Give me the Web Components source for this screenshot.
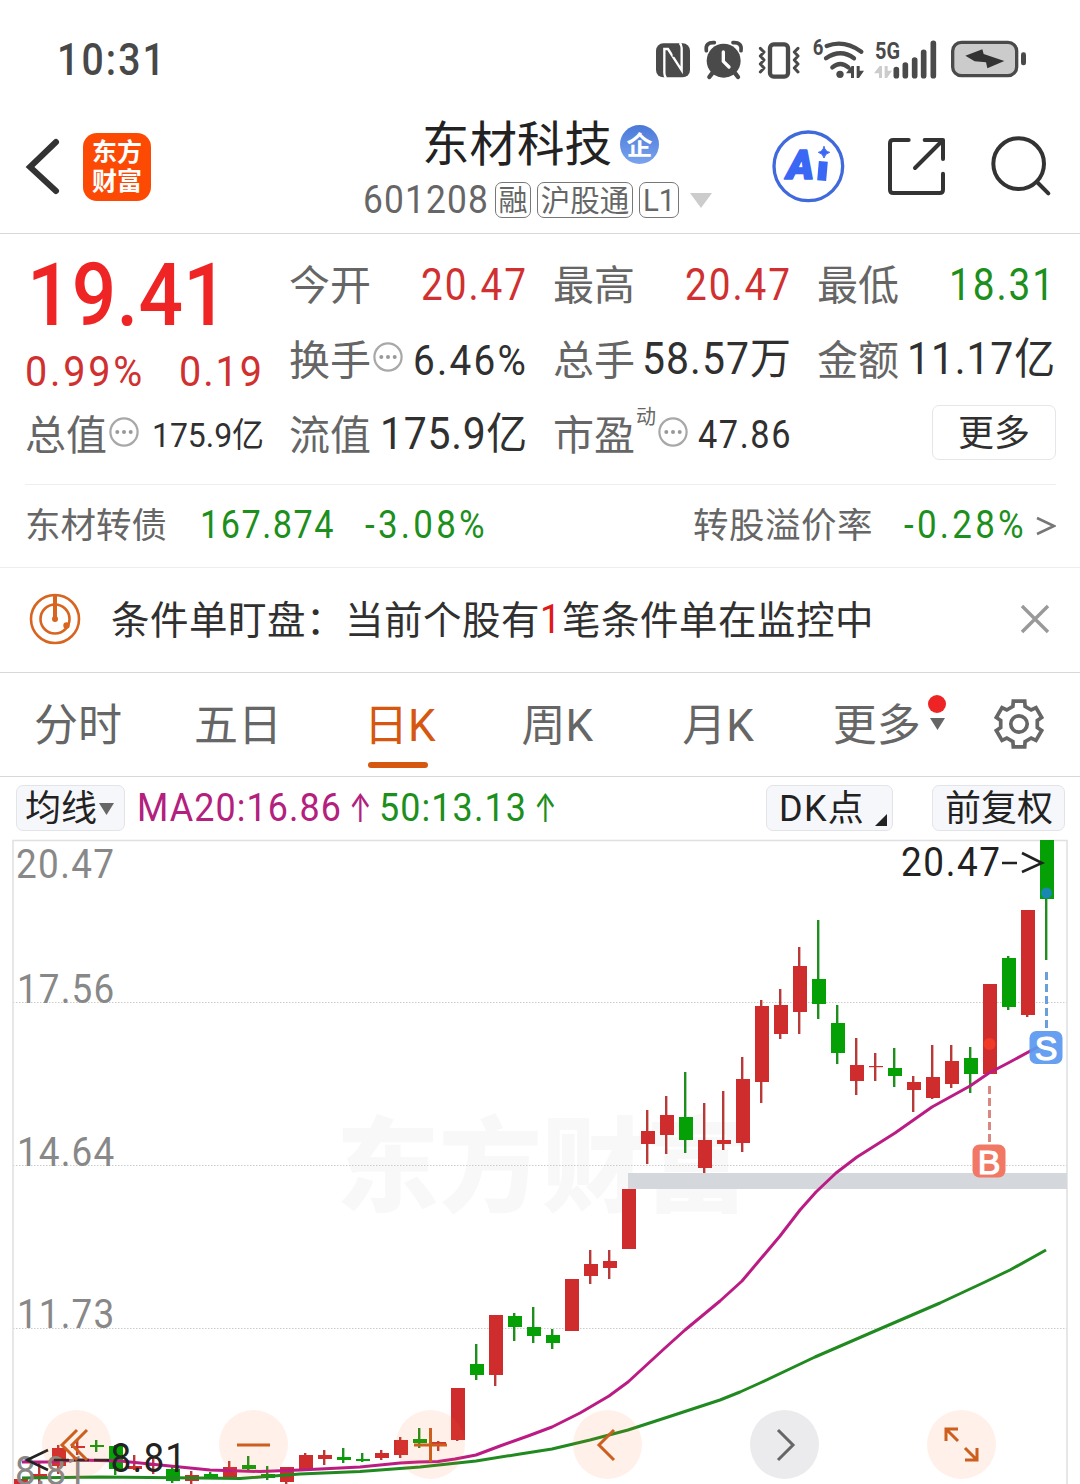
<!DOCTYPE html>
<html lang="zh-CN">
<head>
<meta charset="utf-8">
<title>东材科技 601208</title>
<style>
    html, body {
        margin: 0;
        padding: 0;
        background: #fff;
    }
    body {
        width: 1080px;
        height: 1484px;
        overflow: hidden;
        font-family: Roboto, "Noto Sans CJK SC", sans-serif;
        color: #333;
    }
</style>
</head>
<body>
<stock-page></stock-page>
<script>
function define(name, html, setup) {
  const template = document.createElement('template');
  template.innerHTML = html;
  customElements.define(name, class extends HTMLElement {
    connectedCallback() {
      if (this.shadowRoot) {
        return;
      }
      this.attachShadow({ mode: 'open' }).appendChild(template.content.cloneNode(true));
      if (setup) {
        setup(this, this.shadowRoot);
      }
    }
  });
}

// text run tracked out (or in) to a given width, "narrow" condenses the glyphs
define('text-run', `
<style>
    :host {
        display: inline-block;
        white-space: nowrap;
        line-height: 1.2;
        flex: none;
    }
    span {
        display: inline-block;
        transform-origin: 0 50%;
    }
</style>
<span><slot></slot></span>
`, (el, root) => {
  const span = root.querySelector('span');
  const size = Number(el.getAttribute('size'));
  const width = Number(el.getAttribute('w'));
  const scale = Number(el.getAttribute('narrow')) || 1;
  const text = el.textContent;
  el.style.fontSize = `${size}px`;
  // han glyphs sit a little high on the latin baseline
  if (text.charCodeAt(0) > 0x2e80) {
    el.style.paddingTop = `${Math.round(size * 0.1)}px`;
  }
  if (width) {
    const natural = span.getBoundingClientRect().width;
    el.style.letterSpacing = `${(width / scale - natural) / Array.from(text).length}px`;
    el.style.width = `${width}px`;
    span.style.transform = `scaleX(${scale})`;
  }
});

define('status-bar', `
<style>
    :host {
        display: flex;
        justify-content: space-between;
        height: 110px;
        box-sizing: border-box;
        padding: 20px 40px 0 57px;
        color: #484848;
    }
    text-run {
        font-weight: 500;
        margin-top: 14px;
    }
    svg {
        display: block;
    }
</style>
<text-run size="44.500" w="110" narrow=".88">10:31</text-run>
<svg width="400" height="80" viewBox="0 0 1200 240" fill="#4a4a4a">
  <rect x="48" y="70" width="102" height="102" rx="22"/>
  <path d="M78 174q-5-6-5-16V87h11l41 64V84q0-10-6-15" fill="none" stroke="#fff" stroke-width="7"/>
  <path d="M94 122v36M104 92v18" fill="none" stroke="#4a4a4a" stroke-width="12"/>
  <circle cx="251" cy="122" r="51"/>
  <path d="M199 92q-4-26 24-24M303 92q4-26-24-24" fill="none" stroke="#4a4a4a" stroke-width="11" stroke-linecap="round"/>
  <path d="M218 158l-10 13M284 158l10 13" stroke="#4a4a4a" stroke-width="13" stroke-linecap="round"/>
  <path d="M250 96v28l17 17" fill="none" stroke="#fff" stroke-width="10" stroke-linecap="round"/>
  <rect x="390" y="73" width="54" height="97" rx="11" fill="none" stroke="#4a4a4a" stroke-width="13"/>
  <path d="M361 85l11 11-11 12 11 12-11 12 11 12-11 12M474 85l-11 11 11 12-11 12 11 12-11 12 11 12" fill="none" stroke="#4a4a4a" stroke-width="9" stroke-linecap="round" stroke-linejoin="round"/>
  <text x="518" y="106" font-size="66" font-weight="700" textLength="32" lengthAdjust="spacingAndGlyphs">6</text>
  <path d="M560 78q52-20 104 17M558 115q44-30 84 0M577 142q24-20 48 0" fill="none" stroke="#4a4a4a" stroke-width="13" stroke-linecap="round"/>
  <circle cx="600" cy="163" r="11"/>
  <path d="M618 160l17-22h7v36h-9v-14zM650 138h9v14h13l-15 22h-7z"/>
  <path d="M702 160l17-22h7v36h-9v-14zM734 138h9v14h13l-15 22h-7z" fill="#ccc"/>
  <text x="705" y="116" font-size="70" font-weight="700" textLength="75" lengthAdjust="spacingAndGlyphs">5G</text>
  <path d="M769 149v18M796 135v32M824 120v47M851 97v70M880 70v97" stroke="#4a4a4a" stroke-width="17" stroke-linecap="round"/>
  <rect x="938" y="67" width="192" height="100" rx="26" fill="#cbcbcb" stroke="#4a4a4a" stroke-width="10"/>
  <rect x="1143" y="97" width="15" height="39" rx="7"/>
  <path d="M976 107L1027 88L1031 102L1093 123L1042 145L1038 127L1004 124z" fill="#333"/>
</svg>
`);

define('tag-box', `
<style>
    :host {
        display: flex;
        align-items: center;
        justify-content: center;
        height: 34px;
        border: 1.5px solid #777;
        border-radius: 7px;
        color: #666;
        flex: none;
    }
</style>
<slot></slot>
`);

define('page-header', `
<style>
    :host {
        display: grid;
        grid-template-columns: 360px 360px 360px;
        height: 124px;
        box-sizing: border-box;
        border-bottom: 1.5px solid #d8d8d8;
    }
    svg {
        display: block;
    }
    .left {
        display: flex;
        padding: 23px 0 0 24px;
    }
    .logo {
        display: grid;
        grid-template-columns: 25px 25px;
        grid-template-rows: 29px 29px;
        place-content: center;
        place-items: center;
        width: 68px;
        height: 68px;
        margin-left: 19px;
        border-radius: 14px;
        background: #fc4a05;
        color: #fff;
        font-size: 25px;
        font-weight: 700;
        line-height: 31px;
    }
    .title, .sub {
        display: flex;
        align-items: center;
    }
    .title {
        height: 60px;
        padding: 3px 0 0 62px;
        color: #222;
        gap: 8px;
    }
    .badge {
        width: 39px;
        height: 39px;
        margin-top: 2px;
        border-radius: 50%;
        background: linear-gradient(#4a78d8, #7ba4ee);
        color: #fff;
        font-size: 26px;
        font-weight: 700;
        line-height: 42px;
        text-align: center;
    }
    .sub {
        height: 40px;
        margin-top: 7px;
        padding: 0 0 0 3px;
        gap: 6px;
        color: #666;
    }
</style>
<div class="left">
  <svg width="40" height="70" viewBox="0 0 40 70"><path d="M32 9L6 34l26 24" fill="none" stroke="#333" stroke-width="6" stroke-linecap="round"/></svg>
  <div class="logo"><span>东</span><span>方</span><span>财</span><span>富</span></div>
</div>
<div>
  <div class="title"><text-run size="47.500" w="190">东材科技</text-run><div class="badge">企</div></div>
  <div class="sub">
    <text-run size="38" w="126" narrow=".93" style="padding-top:2px">601208</text-run>
    <tag-box style="width:34px"><text-run size="29">融</text-run></tag-box>
    <tag-box style="width:94px"><text-run size="29.500">沪股通</text-run></tag-box>
    <tag-box style="width:38px"><text-run size="32" w="32" narrow=".92">L1</text-run></tag-box>
    <svg width="22" height="15" viewBox="0 0 22 15" style="margin-left:5px"><path d="M0 0h22L11 15z" fill="#ccc"/></svg>
  </div>
</div>
<svg width="360" height="120" viewBox="-90 0 1080 360" fill="none" stroke="#333" stroke-width="12" stroke-linecap="round" stroke-linejoin="round">
  <circle cx="175" cy="169" r="103" stroke="#4069dc" stroke-width="10"/>
  <text x="110" y="206" font-size="122" font-weight="900" font-style="italic" fill="#3a68f5" stroke="#3a68f5" stroke-width="5" textLength="82" lengthAdjust="spacingAndGlyphs">A</text>
  <path d="M220 154l-5 58" stroke="#3a68f5" stroke-width="27" stroke-linecap="butt"/>
  <path d="M222 110q3 14 17 17-14 3-17 17-3-14-17-17 14-3 17-17z" fill="#3a68f5" stroke="#3a68f5" stroke-width="3"/>
  <path d="M476 90h-46q-10 0-10 10v139q0 10 10 10h139q10 0 10-10v-48M524 90h55v57M576 93l-81 81"/>
  <circle cx="806" cy="161" r="76"/>
  <path d="M861 216l34 34"/>
</svg>
`);

define('info-dot', `
<style>
    :host {
        display: block;
        width: 30px;
        height: 30px;
        flex: none;
    }
</style>
<svg width="30" height="30" viewBox="0 0 30 30"><circle cx="15" cy="15" r="13.6" fill="none" stroke="#a8a8a8" stroke-width="2.2"/><g fill="#999"><circle cx="8.300" cy="15" r="2"/><circle cx="15" cy="15" r="2"/><circle cx="21.700" cy="15" r="2"/></g></svg>
`);

define('quote-cell', `
<style>
    :host {
        display: flex;
        align-items: center;
        justify-content: space-between;
        height: 75px;
    }
    .label {
        display: flex;
        align-items: center;
        height: 75px;
        color: #666;
    }
    .value {
        padding-top: 2px;
        color: var(--tone, #303030);
    }
</style>
<div class="label"><slot name="label"></slot></div>
<div class="value"><slot></slot></div>
`);

define('quote-panel', `
<style>
    :host {
        display: block;
        padding: 13px 24px 0 25px;
    }
    .grid {
        display: grid;
        grid-template-columns: repeat(4, 239px);
        grid-template-rows: repeat(3, 75px);
        column-gap: 25px;
        height: 238px;
        border-bottom: 1.5px solid #eee;
        box-sizing: border-box;
    }
    .price {
        grid-row: 1 / 3;
        display: flex;
        flex-direction: column;
        color: #ee2524;
        height: 150px;
    }
    .price > text-run {
        font-weight: 500;
        margin-left: 2px;
        line-height: 97px;
        padding-bottom: 2px;
    }
    .change {
        display: flex;
        justify-content: space-between;
        color: #d03030;
    }
    .up {
        --tone: #d03030;
    }
    .down {
        --tone: #1c8f1c;
    }
    sup {
        font-size: 20px;
        line-height: 20px;
        align-self: flex-start;
        margin: 10px 2px 0 1px;
    }
    .more {
        width: 122px;
        height: 53px;
        justify-self: end;
        align-self: start;
        margin-top: 8px;
        border: 1.5px solid #e4e6ea;
        border-radius: 7px;
        display: flex;
        align-items: center;
        justify-content: center;
        color: #303030;
    }
    .more text-run {
        margin-top: 0;
    }
    .bond {
        display: flex;
        align-items: center;
        height: 82px;
        color: #666;
    }
    .bond text-run {
        margin-top: -3px;
    }
    .bond .num {
        margin-top: -1px;
        color: #1c8f1c;
    }
</style>
<div class="grid">
  <div class="price">
    <text-run size="87" w="201" narrow=".9">19.41</text-run>
    <div class="change"><text-run size="43" w="120" narrow=".92">0.99%</text-run><text-run size="43" w="85" narrow=".92">0.19</text-run></div>
  </div>
  <quote-cell class="up"><text-run slot="label" size="41">今开</text-run><text-run size="44" w="107" narrow=".88">20.47</text-run></quote-cell>
  <quote-cell class="up"><text-run slot="label" size="41">最高</text-run><text-run size="44" w="107" narrow=".88">20.47</text-run></quote-cell>
  <quote-cell class="down"><text-run slot="label" size="41">最低</text-run><text-run size="44" w="107" narrow=".88">18.31</text-run></quote-cell>
  <quote-cell><text-run slot="label" size="41">换手</text-run><info-dot slot="label" style="margin:-6px 0 0 2px"></info-dot><text-run size="43" w="115" narrow=".9">6.46%</text-run></quote-cell>
  <quote-cell><text-run slot="label" size="41">总手</text-run><text-run size="43.500" w="150" narrow=".94">58.57万</text-run></quote-cell>
  <quote-cell><text-run slot="label" size="41">金额</text-run><text-run size="43.500" w="149" narrow=".94">11.17亿</text-run></quote-cell>
  <quote-cell><text-run slot="label" size="41">总值</text-run><info-dot slot="label" style="margin:-6px 0 0 2px"></info-dot><text-run size="34" w="112" narrow=".94">175.9亿</text-run></quote-cell>
  <quote-cell><text-run slot="label" size="41">流值</text-run><text-run size="43.500" w="148" narrow=".94">175.9亿</text-run></quote-cell>
  <quote-cell><text-run slot="label" size="41">市盈</text-run><sup slot="label">动</sup><info-dot slot="label" style="margin-top:-6px"></info-dot><text-run size="39" w="94" narrow=".88">47.86</text-run></quote-cell>
  <div class="more"><text-run size="36">更多</text-run></div>
</div>
<div class="bond">
  <text-run size="35.500">东材转债</text-run>
  <text-run class="num" size="38" w="135" narrow=".9" style="margin-left:33px">167.874</text-run>
  <text-run class="num" size="38" w="123" narrow=".92" style="margin-left:30px">-3.08%</text-run>
  <text-run size="35.500" w="180" style="margin-left:auto">转股溢价率</text-run>
  <text-run class="num" size="38" w="123" narrow=".92" style="margin-left:31px">-0.28%</text-run>
  <svg width="20" height="22" viewBox="0 0 20 22" style="margin-left:9px"><path d="M1 3l17 8L1 19" fill="none" stroke="#777" stroke-width="2.500"/></svg>
</div>
`);

define('monitor-notice', `
<style>
    :host {
        display: flex;
        align-items: center;
        height: 106px;
        box-sizing: border-box;
        padding: 0 30px 3px 29px;
        border-top: 1.5px solid #eee;
        border-bottom: 1.5px solid #d8d8d8;
        color: #303030;
    }
    .close {
        margin-left: auto;
    }
</style>
<svg width="52" height="52" viewBox="0 0 52 52" fill="none" stroke="#d8651f" stroke-width="2.600"><circle cx="26" cy="26" r="24"/><circle cx="26" cy="26" r="14.500"/><path d="M26 2v24" stroke-width="4"/><circle cx="26" cy="26" r="3" fill="#d8651f" stroke="none"/><circle cx="37.500" cy="32.500" r="3.200" fill="#d8651f" stroke="none"/></svg>
<text-run size="38.500" w="234" style="margin:2px 0 0 30px">条件单盯盘：</text-run>
<text-run size="38.500" w="195" style="margin-top:2px">当前个股有</text-run>
<text-run size="41" w="22" narrow=".9" style="color:#e01a1a;margin-top:3px">1</text-run>
<text-run size="38.500" w="312" style="margin-top:2px">笔条件单在监控中</text-run>
<svg class="close" width="30" height="30" viewBox="0 0 30 30"><path d="M2 2l26 26M28 2L2 28" stroke="#999" stroke-width="3.400"/></svg>
`);

define('period-tab', `
<style>
    :host {
        display: flex;
        flex-direction: column;
        align-items: center;
        color: #666;
        height: 103px;
        position: relative;
    }
    text-run {
        line-height: 107px;
    }
    i {
        display: none;
    }
    :host([active]) {
        color: #d6570f;
    }
    :host([active]) i {
        display: block;
        position: absolute;
        left: 4px;
        bottom: 8px;
        width: 60px;
        height: 6px;
        border-radius: 3px;
        background: #d6570f;
    }
</style>
<text-run size="44"><slot></slot></text-run><i></i>
`);

define('gear-icon', `
<style>
    :host {
        display: block;
    }
</style>
<svg width="54" height="54" viewBox="-27 -27 54 54" fill="none" stroke="#666" stroke-width="3.700"><path/><circle r="8.200"/></svg>
`, (el, root) => {
  const points = [];
  for (let a = 0; a < 360; a += 60) {
    [[23.6, -14], [23.6, 14], [18.6, 19], [18.6, 41]].forEach(([r, d]) => {
      const rad = (a + d - 90) * Math.PI / 180;
      points.push(`${(r * Math.cos(rad)).toFixed(1)} ${(r * Math.sin(rad)).toFixed(1)}`);
    });
  }
  root.querySelector('path').setAttribute('d', `M${points.join('L')}z`);
});

define('period-tabs', `
<style>
    :host {
        display: flex;
        align-items: center;
        height: 104px;
        box-sizing: border-box;
        padding-left: 34px;
        border-bottom: 1.5px solid #d8d8d8;
    }
    .arrow {
        position: absolute;
        left: 94px;
        top: 21px;
    }
    gear-icon {
        margin: 3px 0 0 71px;
    }
</style>
<period-tab>分时</period-tab>
<period-tab style="margin-left:72px">五日</period-tab>
<period-tab active style="margin-left:82px">日K</period-tab>
<period-tab style="margin-left:86px">周K</period-tab>
<period-tab style="margin-left:89px">月K</period-tab>
<period-tab style="margin-left:79px">更多<svg class="arrow" width="20" height="40" viewBox="0 0 20 40"><circle cx="10" cy="10" r="9" fill="#ee2424"/><path d="M3 24h15l-7.500 12z" fill="#666"/></svg></period-tab>
<gear-icon></gear-icon>
`);

define('tool-button', `
<style>
    :host {
        display: flex;
        align-items: center;
        box-sizing: border-box;
        height: 46px;
        border: 1.5px solid #e2e4e8;
        border-radius: 7px;
        background: #f6f7fa;
        color: #222;
        flex: none;
    }
</style>
<slot></slot>
`);

define('chart-toolbar', `
<style>
    :host {
        display: flex;
        align-items: center;
        height: 62px;
        padding: 0 15px 0 16px;
    }
    .ma {
        display: flex;
        align-items: center;
        margin-left: 12px;
        color: #b3207d;
    }
    .ma + .ma {
        margin-left: 11px;
        color: #1c8f1c;
    }
    .up {
        font-family: Inter, sans-serif;
        margin-left: 7px;
        transform: scale(.85, 1.25);
        transform-origin: 0 50%;
    }
</style>
<tool-button style="width:109px;padding-left:8px"><text-run size="36">均线</text-run><svg width="15" height="13" viewBox="0 0 15 13" style="margin-left:2px"><path d="M0 1h15L7.500 13z" fill="#666"/></svg></tool-button>
<div class="ma"><text-run size="39" w="205" narrow=".92">MA20:16.86</text-run><text-run class="up" size="32" w="19">↑</text-run></div>
<div class="ma"><text-run size="39" w="148" narrow=".92">50:13.13</text-run><text-run class="up" size="32" w="19">↑</text-run></div>
<tool-button style="width:127px;padding-left:12px;margin-left:auto"><text-run size="36" w="86" style="padding-top:4px">DK点</text-run><svg width="12" height="12" viewBox="0 0 12 12" style="margin:23px 0 0 10px"><path d="M12 0v12H0z" fill="#222"/></svg></tool-button>
<tool-button style="width:133px;padding-left:12px;margin-left:39px"><text-run size="36">前复权</text-run></tool-button>
`);

define('chart-button', `
<style>
    :host {
        display: flex;
        align-items: center;
        justify-content: center;
        width: 69px;
        height: 69px;
        border-radius: 50%;
        background: rgba(255, 110, 40, 0.1);
        color: #cc5f1e;
    }
    :host([plain]) {
        background: rgba(60, 60, 80, 0.1);
        color: #666;
    }
    svg {
        display: block;
    }
</style>
<svg width="69" height="69" viewBox="0 0 69 69" fill="none" stroke="currentColor" stroke-width="3"><path/></svg>
`, (el, root) => {
  const icons = {
    first: 'M35 20L20 35l15 15M45 20L30 35l15 15',
    minus: 'M18 35h33',
    plus: 'M18 35h33M34.500 18v34',
    prev: 'M41 20L26 35l15 15',
    next: 'M28 20l15 15-15 15',
    expand: 'M19 31V19h12M19 19l12 12M50 38v12H38M50 50L38 38'
  };
  root.querySelector('path').setAttribute('d', icons[el.getAttribute('icon')]);
});

// [high, body top, body bottom, low, up], newest bar first, in chart pixels
const BARS = [
  [840, 840, 899, 960, 0], [910, 910, 1015, 1017, 1], [956, 958, 1007, 1010, 0], [984, 984, 1074, 1074, 1],
  [1047, 1058, 1074, 1093, 0], [1045, 1061, 1084, 1088, 1], [1045, 1077, 1098, 1099, 1], [1076, 1082, 1090, 1112, 1],
  [1048, 1068, 1076, 1087, 0], [1053, 1066, 1067.2, 1081, 1], [1038, 1065, 1081, 1095, 1], [1005, 1023, 1053, 1064, 0],
  [920, 979, 1004, 1019, 0], [947, 966, 1012, 1034, 1], [989, 1005, 1034, 1039, 1], [1000, 1006, 1082, 1103, 1],
  [1057, 1079, 1143, 1152, 1], [1091, 1140, 1144, 1150, 1], [1103, 1140, 1168, 1173, 1], [1072, 1117, 1140, 1153, 0],
  [1096, 1115, 1135, 1154, 1], [1110, 1131, 1144, 1164, 1], [1189, 1189, 1249, 1249, 1], [1250, 1261, 1268, 1279, 1],
  [1250, 1264, 1276, 1284, 1], [1279, 1279, 1331, 1331, 1], [1329, 1335, 1343, 1349, 0], [1307, 1327, 1336, 1343, 0],
  [1313, 1316, 1327, 1341, 0], [1315, 1315, 1375, 1386, 1], [1344, 1364, 1375, 1380, 0], [1388, 1388, 1440, 1441, 1],
  [1441, 1442, 1446, 1451, 1], [1428, 1439, 1443, 1448, 0], [1437, 1440, 1455, 1458, 1], [1450, 1453, 1458, 1460, 1],
  [1453, 1459, 1461, 1462, 0], [1448, 1457, 1460, 1463, 0], [1450, 1455, 1459, 1465, 1], [1453, 1455, 1469, 1470, 1],
  [1467, 1467, 1482, 1484, 1], [1466, 1474, 1478, 1480, 0], [1456, 1465, 1469, 1472, 0], [1461, 1467, 1478, 1479, 1],
  [1472, 1474, 1478, 1479, 0], [1471, 1475, 1481, 1484, 1], [1467, 1469, 1481, 1483, 0], [1458, 1464, 1466, 1474, 1],
  [1455, 1466, 1469, 1470, 1], [1445, 1446, 1469, 1475, 0], [1440, 1445, 1447, 1452, 0], [1440, 1446, 1448, 1455, 1],
  [1445, 1448, 1466, 1474, 1], [1462, 1474, 1477, 1484, 1], [1479, 1479, 1484, 1484, 1]
];

define('k-line-chart', `
<style>
    :host {
        display: block;
        position: relative;
        height: 645px;
    }
    svg {
        display: block;
        overflow: visible;
    }
    nav {
        position: absolute;
        left: 42px;
        right: 84px;
        top: 571px;
        display: flex;
        justify-content: space-between;
    }
</style>
<svg width="1080" height="645" viewBox="0 839 1080 645">
  <g font-size="103" font-weight="900" fill="#f8f8f8"><text x="336" y="1204" textLength="412">东方财富</text></g>
  <path d="M13 1002.500h1054M13 1165.500h1054M13 1328.500h1054" stroke="#ccc" stroke-width="1" stroke-dasharray="1.500 1.500"/>
  <path d="M13 1484V840.500h1054V1484" fill="none" stroke="#e0e0e2" stroke-width="1.500"/>
  <rect x="628" y="1173" width="439" height="16" fill="#d4d7dc"/>
  <g font-size="41" fill="#888">
    <text transform="translate(16 878) scale(.9 1)" textLength="109">20.47</text>
    <text transform="translate(17 1003) scale(.9 1)" textLength="108">17.56</text>
    <text transform="translate(17 1166) scale(.9 1)" textLength="108">14.64</text>
    <text transform="translate(17 1328) scale(.9 1)" textLength="108">11.73</text>
  </g>
  <g class="bars"></g>
  <g fill="none" stroke-width="3" stroke-linejoin="round">
    <polyline stroke="#208a20" points="22,1478 100,1477 200,1478 240,1478.500 300,1474 360,1471.500 420,1467 476,1461 520,1454 552,1449 590,1440 628,1430 665,1418 720,1400 740,1392 760,1383 815,1357 875,1331 940,1303 985,1282 1010,1270 1046,1250"/>
    <polyline stroke="#bb1c84" points="22,1462 50,1462 78,1460 120,1461 150,1464 210,1470 260,1471.500 300,1470 360,1467 400,1463 418,1462 438,1461.500 455,1459 476,1455 500,1446 528,1436 552,1427 580,1413 609,1396 628,1382 665,1348 685,1330 720,1301 742,1281 780,1236 800,1210 816,1192 836,1173 857,1157 895,1133 932,1107 970,1086 989,1073 1010,1062 1045,1043"/>
  </g>
  <text transform="translate(15 1485) scale(.9 1)" font-size="41" fill="#888" textLength="80">8.81</text>
  <g fill="#222">
    <text transform="translate(110.500 1472) scale(.9 1)" font-size="41" textLength="84">8.81</text>
    <path d="M48 1450l-21 10 21 10M54 1460h15M74 1460h15M94 1460h15" fill="none" stroke="#222" stroke-width="2.600"/>
    <text transform="translate(901 876) scale(.9 1)" font-size="41" textLength="110">20.47</text>
    <path d="M1002 863h15M1022 853l20 10-20 9" fill="none" stroke="#222" stroke-width="2.600"/>
  </g>
  <circle cx="1046.500" cy="893" r="5.500" fill="#1888b0"/>
  <circle cx="989.500" cy="1044" r="6" fill="#f03a28"/>
  <path d="M1046.500 972v56" stroke="#6aa0da" stroke-width="3" stroke-dasharray="8 4"/>
  <path d="M989.500 1086v56" stroke="#d98880" stroke-width="3" stroke-dasharray="8 4"/>
  <rect x="1029.500" y="1031" width="33" height="33" rx="7" fill="#5b98f0" fill-opacity=".93"/>
  <rect x="972.500" y="1144.500" width="33" height="33" rx="7" fill="#f27866"/>
  <g font-family="Liberation Sans, sans-serif" font-size="34" fill="#fff" stroke="#fff" stroke-width="1.200" text-anchor="middle"><text x="1046" y="1060">S</text><text x="989" y="1173.500">B</text></g>
</svg>
<nav>
  <chart-button icon="first"></chart-button>
  <chart-button icon="minus"></chart-button>
  <chart-button icon="plus"></chart-button>
  <chart-button icon="prev"></chart-button>
  <chart-button icon="next" plain></chart-button>
  <chart-button icon="expand"></chart-button>
</nav>
`, (el, root) => {
  root.querySelector('.bars').innerHTML = BARS.map(([high, top, bottom, low, up], i) => {
    const x = 1040 - i * 19;
    const body = up ? '#cf2d2d' : '#05a005';
    const wick = up ? '#b83a38' : '#1c8f1c';
    return `<rect x="${x + 5}" y="${high}" width="2.4" height="${low - high}" fill="${wick}"/>`
      + `<rect x="${x}" y="${top}" width="14" height="${bottom - top}" fill="${body}"/>`;
  }).join('');
});

define('stock-page', `
<style>
    :host {
        display: flex;
        flex-direction: column;
        width: 1080px;
        height: 1484px;
        overflow: hidden;
    }
    :host > * {
        flex: none;
    }
</style>
<status-bar></status-bar>
<page-header></page-header>
<quote-panel></quote-panel>
<monitor-notice></monitor-notice>
<period-tabs></period-tabs>
<chart-toolbar></chart-toolbar>
<k-line-chart></k-line-chart>
`);
</script>
</body>
</html>
